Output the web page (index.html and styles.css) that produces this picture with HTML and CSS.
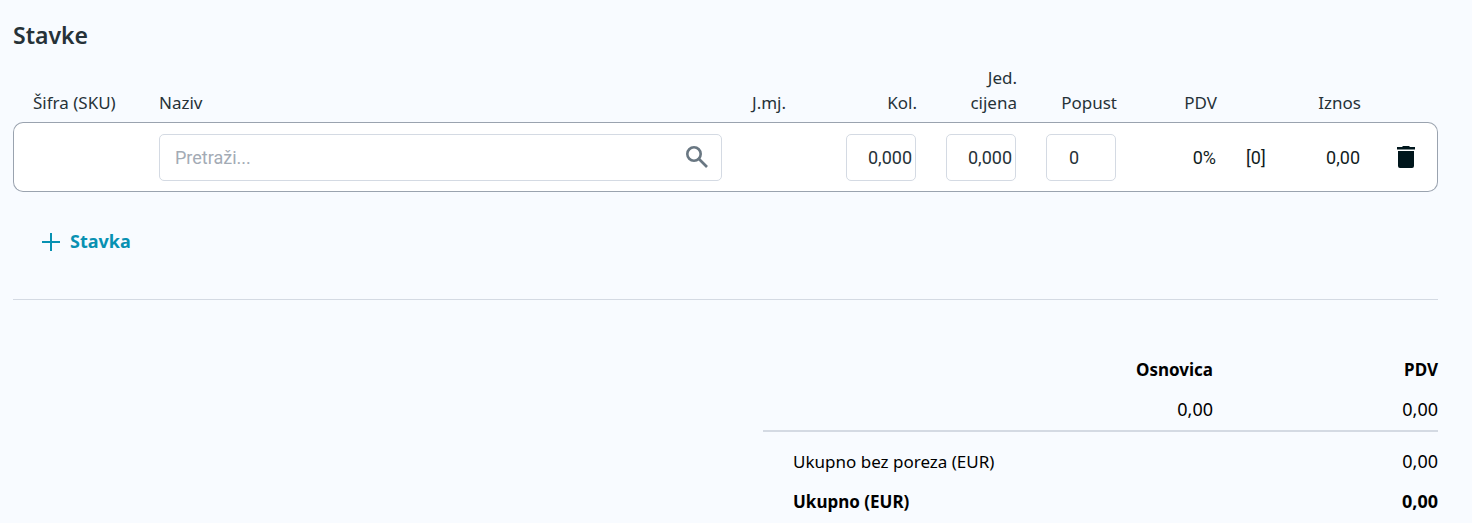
FILE: index.html
```html
<!DOCTYPE html>
<html lang="hr">
<head>
  <meta charset="UTF-8" />
  <meta name="viewport" content="width=device-width, initial-scale=1.0" />
  <title>Stavke</title>
  <link rel="stylesheet" href="styles.css">
</head>
<body>

  <section class="items">
    <h2>Stavke</h2>

    <table class="items-table">
      <colgroup>
        <col class="col-sku">
        <col class="col-name">
        <col class="col-unit">
        <col class="col-num">
        <col class="col-num">
        <col class="col-num">
        <col class="col-num">
        <col class="col-code">
        <col class="col-amount">
        <col class="col-action">
      </colgroup>
      <thead>
        <tr>
          <th>Šifra (SKU)</th>
          <th>Naziv</th>
          <th>J.mj.</th>
          <th class="right">Kol.</th>
          <th class="right">Jed. cijena</th>
          <th class="right">Popust</th>
          <th class="right">PDV</th>
          <th></th>
          <th class="right">Iznos</th>
          <th></th>
        </tr>
      </thead>
      <tbody>
        <tr>
          <td></td>
          <td>
            <div class="search">
              <input type="text" class="search-input" placeholder="Pretraži..." aria-label="Naziv" />
              <svg class="search-icon" viewBox="0 0 22 22" width="22" height="22" aria-hidden="true">
                <circle cx="8" cy="8" r="6.7" />
                <path d="M13 13l8 8" />
              </svg>
            </div>
          </td>
          <td></td>
          <td><input type="text" class="field" value="0,000" aria-label="Kol." /></td>
          <td><input type="text" class="field" value="0,000" aria-label="Jed. cijena" /></td>
          <td><input type="text" class="field field-discount" value="0" aria-label="Popust" /></td>
          <td class="right">0%</td>
          <td>[0]</td>
          <td class="right">0,00</td>
          <td class="action">
            <button type="button" class="delete" aria-label="Obriši">
              <svg viewBox="0 0 18 22" width="18" height="22" aria-hidden="true">
                <path d="M0 1h5l1-1h6l1 1h5v2.5H0zM1 5h16v15a2 2 0 0 1-2 2H3a2 2 0 0 1-2-2z" />
              </svg>
            </button>
          </td>
        </tr>
      </tbody>
    </table>

    <button type="button" class="add">
      <svg viewBox="0 0 18 18" width="18" height="18" aria-hidden="true">
        <path d="M9 0v18M0 9h18" />
      </svg>
      Stavka
    </button>
  </section>

  <section class="summary">
    <table class="totals">
      <thead>
        <tr>
          <th></th>
          <th>Osnovica</th>
          <th>PDV</th>
        </tr>
      </thead>
      <tbody class="tax">
        <tr>
          <td></td>
          <td>0,00</td>
          <td>0,00</td>
        </tr>
      </tbody>
      <tbody class="sum">
        <tr>
          <th colspan="2">Ukupno bez poreza (EUR)</th>
          <td>0,00</td>
        </tr>
        <tr class="total">
          <th colspan="2">Ukupno (EUR)</th>
          <td>0,00</td>
        </tr>
      </tbody>
    </table>
  </section>

</body>
</html>
```

FILE: styles.css
```css
* {
  box-sizing: border-box;
}
body {
  margin: 0;
  padding: 20px 34px 0 13px;
  background: #f8fbff;
  color: #263238;
  font-family: "Noto Sans", sans-serif;
  font-size: 17px;
  line-height: 25px;
}
h2 {
  margin: 0 0 15px;
  font-size: 23px;
  font-weight: 600;
  line-height: 30px;
  color: #263238;
}
table {
  width: 100%;
  border-collapse: separate;
  border-spacing: 0;
  table-layout: fixed;
}

/* stavke */
.items {
  padding-bottom: 45px;
  border-bottom: 1px solid #d4dae3;
}
.col-sku {
  width: 131px;
}
.col-unit,
.col-amount {
  width: 94px;
}
.col-num {
  width: 100px;
}
.col-code {
  width: 50px;
}
.col-action {
  width: 63px;
}
.items-table th {
  padding: 0 15px 7px;
  font-weight: 400;
  text-align: left;
  vertical-align: bottom;
}
.items-table th:first-child {
  padding-left: 20px;
  padding-right: 0;
}
.items-table .right {
  text-align: right;
}
.items-table th.right {
  padding-right: 14px;
}
.items-table td {
  height: 70px;
  padding: 0 15px;
  background: #fff;
  border: solid #9aa3af;
  border-width: 1px 0;
  color: #111c22;
  font-family: Roboto, sans-serif;
  font-size: 18px;
}
.items-table td:first-child {
  border-left-width: 1px;
  border-radius: 10px 0 0 10px;
}
.items-table td:last-child {
  border-right-width: 1px;
  border-radius: 0 10px 10px 0;
}
.search {
  display: flex;
  align-items: center;
  height: 47px;
  padding: 0 13px 0 15px;
  border: 1px solid #d4dae3;
  border-radius: 5px;
}
.search-input {
  flex: 1;
  min-width: 0;
  padding: 0;
  border: 0;
  outline: 0;
  background: none;
  font: inherit;
}
.search-input::placeholder {
  color: #a3abb5;
}
.search-icon {
  fill: none;
  stroke: #697782;
  stroke-width: 2.6;
}
.field {
  display: block;
  width: 70px;
  height: 47px;
  padding: 0 3px;
  border: 1px solid #d4dae3;
  border-radius: 5px;
  background: #fff;
  color: #263238;
  font: inherit;
  text-align: right;
}
.field-discount {
  padding-right: 36px;
}
.items-table .action {
  padding: 0;
}
.delete {
  display: block;
  margin: 0 auto;
  padding: 0;
  border: 0;
  background: none;
  cursor: pointer;
}
.delete svg {
  display: block;
  fill: #00161c;
}
.add {
  display: flex;
  align-items: center;
  gap: 10px;
  margin: 37px 0 0 29px;
  padding: 0;
  border: 0;
  background: none;
  color: #0891b2;
  font-family: inherit;
  font-size: 18px;
  font-weight: 700;
  line-height: 25px;
  cursor: pointer;
}
.add svg {
  fill: none;
  stroke: #0891b2;
  stroke-width: 2;
}

/* ukupno */
.summary {
  display: flex;
  justify-content: flex-end;
  padding-top: 49px;
}
.totals {
  width: 675px;
  color: #000;
}
.totals th,
.totals td {
  height: 40px;
  padding: 0;
  text-align: right;
}
.totals td {
  font-size: 18px;
}
.totals .tax td {
  height: 43px;
  border-bottom: 2px solid #d4dae3;
}
.totals .sum th {
  padding-left: 30px;
  font-weight: 400;
  text-align: left;
}
.totals .sum tr:first-child th,
.totals .sum tr:first-child td {
  height: 49px;
  padding-top: 10px;
}
.totals .total th,
.totals .total td {
  font-weight: 700;
}
```
